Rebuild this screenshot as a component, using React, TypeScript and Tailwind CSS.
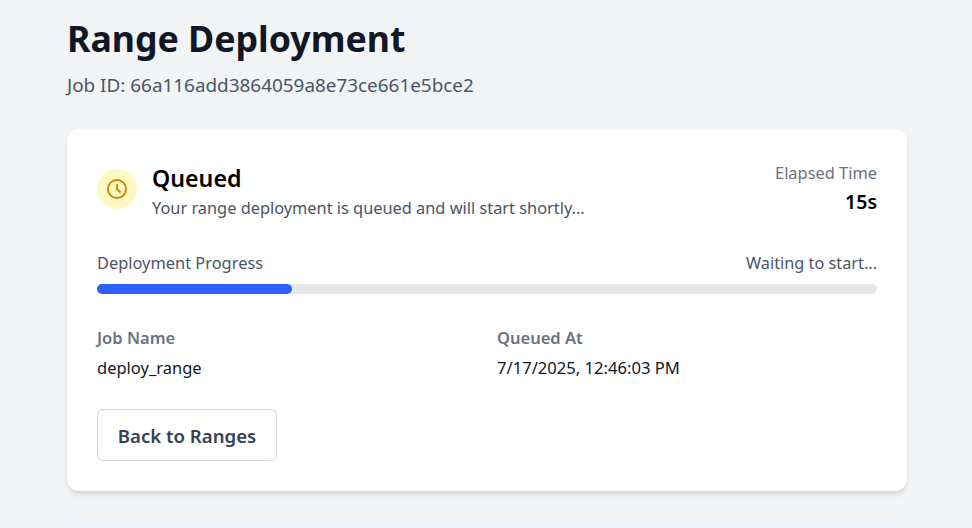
export default function App() {
  return (
    <div className="h-screen overflow-hidden bg-gray-100 font-['Noto_Sans',sans-serif]">
      <div className="ml-[67px] w-[840px] pt-[18px]">
        <h1 className="text-[35.7px] leading-10 font-bold text-gray-900">Range Deployment</h1>
        <p className="mt-[15px] text-[18.9px] leading-6 text-gray-600">Job ID: 66a116add3864059a8e73ce661e5bce2</p>

        <div className="mt-8 rounded-xl bg-white p-[30px] shadow-md">
          <div className="flex items-center justify-between">
            <div className="flex items-center">
              <div className="mb-px flex h-10 w-10 items-center justify-center rounded-full bg-yellow-100">
                <svg className="h-6 w-6 text-[#ca8a04]" fill="none" stroke="currentColor" strokeWidth="2" strokeLinecap="round" strokeLinejoin="round" viewBox="0 0 24 24">
                  <path d="M12 8v4l3 3m6-3a9 9 0 11-18 0 9 9 0 0118 0z" />
                </svg>
              </div>
              <div className="ml-[15px]">
                <h2 className="mt-[3px] text-[23.2px] leading-8 font-semibold text-black">Queued</h2>
                <p className="mt-[2px] text-[16.35px] leading-6 text-gray-600">Your range deployment is queued and will start shortly...</p>
              </div>
            </div>
            <div className="text-right">
              <p className="mb-px text-[16.4px] leading-6 text-gray-500">Elapsed Time</p>
              <p className="mb-px text-[19.5px] leading-8 font-semibold text-black">15s</p>
            </div>
          </div>

          <div className="mt-[31px]">
            <div className="flex justify-between text-[16.4px] leading-6 text-gray-600">
              <span>Deployment Progress</span>
              <span className="text-[16.3px]">Waiting to start...</span>
            </div>
            <div className="mt-[9px] h-2.5 rounded-full bg-gray-200">
              <div className="h-2.5 w-1/4 rounded-full bg-[#2f5fff]" />
            </div>
          </div>

          <div className="mt-8 grid grid-cols-2 gap-x-5">
            <div>
              <p className="text-[16.5px] leading-6 font-semibold text-gray-500">Job Name</p>
              <p className="mt-1.5 text-[16.5px] leading-6 text-gray-900">deploy_range</p>
            </div>
            <div>
              <p className="text-[16.5px] leading-6 font-semibold text-gray-500">Queued At</p>
              <p className="mt-1.5 text-[16.6px] leading-6 text-gray-900">7/17/2025, 12:46:03 PM</p>
            </div>
          </div>

          <button className="mt-[29px] flex h-[52px] w-[180px] items-center justify-center rounded-md border border-gray-300 bg-white pt-px text-[18.6px] font-semibold text-gray-700">
            Back to Ranges
          </button>
        </div>

        <div className="mt-[31px] h-10 rounded-xl bg-blue-50" />
      </div>
    </div>
  );
}
